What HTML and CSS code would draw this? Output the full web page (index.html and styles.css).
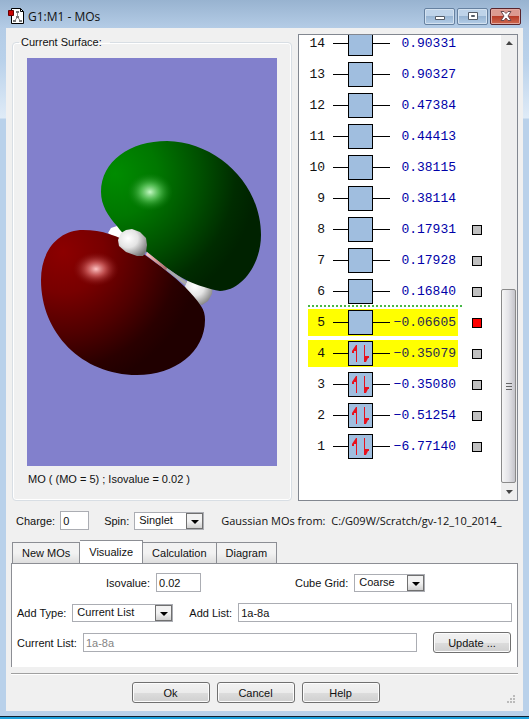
FILE: index.html
```html
<!DOCTYPE html>
<html lang="en">

<head>
    <meta charset="UTF-8">
    <meta name="viewport" content="width=device-width, initial-scale=1.0">
    <title>G1:M1 - MOs</title>
    <link rel="stylesheet" href="styles.css">
</head>

<body>
    <!-- title bar -->
    <header class="titlebar">
        <svg class="app-icon" width="16" height="16" viewBox="0 0 16 16">
            <path d="M3.500 .5h9l3 3v12h-12z" fill="#fff" stroke="#000"/>
            <path d="M12.500 .5v3h3" fill="none" stroke="#000"/>
            <path d="M9.500 4v5M9.500 9l-3 4M9.500 9l3 4" stroke="#888" fill="none"/>
            <path d="M8 3h3v2H8zM8 8h3v2H8zM5 12h3v2H5zM11 12h3v2h-3z" fill="#777"/>
            <path d="M.5 2.500h5v5h-5z" fill="#c80000" stroke="#600"/>
        </svg>
        <h1>G1:M1 - MOs</h1>
        <div class="window-buttons">
            <button aria-label="Minimize"><svg width="12" height="10" viewBox="0 0 12 10"><path d="M1.500 5.500h9v3h-9z" fill="#fff" stroke="#535b66"/></svg></button>
            <button aria-label="Maximize"><svg width="12" height="10" viewBox="0 0 12 10"><path d="M1.500 1.500h9v7h-9z" fill="#fff" stroke="#535b66"/><path d="M4.500 4.500h3v1h-3z" fill="#9cb4d0" stroke="#535b66"/></svg></button>
            <button class="close" aria-label="Close"><svg width="12" height="10" viewBox="0 0 12 10"><path d="M1 .5h3l2 2 2-2h3L8 5l3 4.500H8l-2-2.500-2 2.500H1L4 5z" fill="#fff" stroke="#6b4a4e"/></svg></button>
        </div>
    </header>

    <main class="client">
        <div class="top">
            <fieldset class="surface">
                <legend>Current Surface:</legend>
                <svg class="view" viewBox="0 0 250 408" preserveAspectRatio="xMidYMid slice">
                    <defs>
                        <radialGradient id="green" gradientUnits="userSpaceOnUse" cx="88" cy="116" r="142">
                            <stop offset="0" stop-color="#008c00"/>
                            <stop offset=".3" stop-color="#007700"/>
                            <stop offset=".6" stop-color="#005000"/>
                            <stop offset=".85" stop-color="#002c00"/>
                            <stop offset="1" stop-color="#002200"/>
                        </radialGradient>
                        <radialGradient id="red" gradientUnits="userSpaceOnUse" cx="36" cy="194" r="136">
                            <stop offset="0" stop-color="#8c0000"/>
                            <stop offset=".3" stop-color="#780000"/>
                            <stop offset=".6" stop-color="#500000"/>
                            <stop offset=".85" stop-color="#2a0000"/>
                            <stop offset="1" stop-color="#200000"/>
                        </radialGradient>
                        <radialGradient id="shineGreen">
                            <stop offset="0" stop-color="#c4f8c4"/>
                            <stop offset=".4" stop-color="#60c860" stop-opacity=".8"/>
                            <stop offset="1" stop-color="#108010" stop-opacity="0"/>
                        </radialGradient>
                        <radialGradient id="shineRed">
                            <stop offset="0" stop-color="#ffc4c4"/>
                            <stop offset=".4" stop-color="#d06060" stop-opacity=".8"/>
                            <stop offset="1" stop-color="#801010" stop-opacity="0"/>
                        </radialGradient>
                        <radialGradient id="atom" cx=".35" cy=".35" r=".75">
                            <stop offset="0" stop-color="#fff"/>
                            <stop offset=".45" stop-color="#e4e4e4"/>
                            <stop offset="1" stop-color="#777"/>
                        </radialGradient>
                        <linearGradient id="bond">
                            <stop offset="0" stop-color="#ffc8c4"/>
                            <stop offset="1" stop-color="#a86860"/>
                        </linearGradient>
                    </defs>
                    <path d="M81 175l3-5 6-2 6 4 3 10-11-2z" fill="#fff"/>
                    <path d="M158 228l3-7 10-3 10 2 5 6-1 10-4 7-6 4-7-2-8-8z" fill="url(#atom)"/>
                    <path d="M74 134C74 103 103 83 140 83C190 84 234 126 234 177C234 207 214 233 193 233C182 231 170 227 161 223C153 219 147 215 140 210L120 194C108 187 97 178 90 168C81 158 74 147 74 134z" fill="url(#green)"/>
                    <path d="M14 222C14 192 32 172 56 172C75 172 92 178 105 187L118 197C132 207 147 218 158 229C164 235 170 242 174 248C177 252 178 257 178 262C178 294 148 317 110 317C55 317 14 275 14 222z" fill="url(#red)"/>
                    <path d="M120 194l20 16v3l-21-16z" fill="url(#bond)"/>
                    <path d="M140 210l20 14-2 3-19-15z" fill="#aaa"/>
                    <ellipse cx="123" cy="134" rx="23" ry="19" fill="url(#shineGreen)"/>
                    <ellipse cx="69" cy="211" rx="23" ry="17" fill="url(#shineRed)"/>
                    <path d="M91 182l3-7 5-3 6-1 8 3 6 6 1 7-1 7-3 4-6 0-11-4-7-6z" fill="url(#atom)"/>
                </svg>
                <p>MO ( (MO = 5) ; Isovalue = 0.02 )</p>
            </fieldset>

            <!-- orbital energy levels -->
            <div class="levels">
                <ol reversed>
                    <li><span class="level"><b>14</b><i></i><span class="box"></span><i></i><span class="energy">0.90331</span></span></li>
                    <li><span class="level"><b>13</b><i></i><span class="box"></span><i></i><span class="energy">0.90327</span></span></li>
                    <li><span class="level"><b>12</b><i></i><span class="box"></span><i></i><span class="energy">0.47384</span></span></li>
                    <li><span class="level"><b>11</b><i></i><span class="box"></span><i></i><span class="energy">0.44413</span></span></li>
                    <li><span class="level"><b>10</b><i></i><span class="box"></span><i></i><span class="energy">0.38115</span></span></li>
                    <li><span class="level"><b>9</b><i></i><span class="box"></span><i></i><span class="energy">0.38114</span></span></li>
                    <li><span class="level"><b>8</b><i></i><span class="box"></span><i></i><span class="energy">0.17931</span></span><input type="checkbox" aria-label="Show MO 8"></li>
                    <li><span class="level"><b>7</b><i></i><span class="box"></span><i></i><span class="energy">0.17928</span></span><input type="checkbox" aria-label="Show MO 7"></li>
                    <li class="lumo"><span class="level"><b>6</b><i></i><span class="box"></span><i></i><span class="energy">0.16840</span></span><input type="checkbox" aria-label="Show MO 6"></li>
                    <li class="selected"><span class="level"><b>5</b><i></i><span class="box"></span><i></i><span class="energy">&minus;0.06605</span></span><input type="checkbox" aria-label="Show MO 5" checked></li>
                    <li class="selected"><span class="level"><b>4</b><i></i><span class="box"><svg width="23" height="23"><use href="#pair"/></svg></span><i></i><span class="energy">&minus;0.35079</span></span><input type="checkbox" aria-label="Show MO 4"></li>
                    <li><span class="level"><b>3</b><i></i><span class="box"><svg width="23" height="23"><use href="#pair"/></svg></span><i></i><span class="energy">&minus;0.35080</span></span><input type="checkbox" aria-label="Show MO 3"></li>
                    <li><span class="level"><b>2</b><i></i><span class="box"><svg width="23" height="23"><use href="#pair"/></svg></span><i></i><span class="energy">&minus;0.51254</span></span><input type="checkbox" aria-label="Show MO 2"></li>
                    <li><span class="level"><b>1</b><i></i><span class="box"><svg width="23" height="23"><g id="pair" fill="#e8101c"><path d="M7 20V9H5v2H3V9l2-3 2-3h1v17z"/><path d="M15 3h1v11h4v2h-1l-2 4h-2z"/></g></svg></span><i></i><span class="energy">&minus;6.77140</span></span><input type="checkbox" aria-label="Show MO 1"></li>
                </ol>
                <div class="scrollbar">
                    <svg width="16" height="17"><path d="M5 10l3-4 4 4z" fill="#444"/></svg>
                    <div class="track">
                        <div class="thumb"><svg width="8" height="9"><path d="M1 1h6M1 4h6M1 7h6" stroke="#666" shape-rendering="crispEdges"/></svg></div>
                    </div>
                    <svg width="16" height="17"><path d="M5 7h7l-4 4z" fill="#444"/></svg>
                </div>
            </div>
        </div>

        <div class="state">
            <label for="charge">Charge:</label>
            <input id="charge" class="charge" type="text" value="0">
            <label for="spin">Spin:</label>
            <span class="combo spin"><select id="spin"><option>Singlet</option></select></span>
            <span class="source">Gaussian MOs from: &nbsp;C:/G09W/Scratch/gv-12_10_2014_</span>
        </div>

        <nav class="tabs">
            <button>New MOs</button>
            <button class="active">Visualize</button>
            <button>Calculation</button>
            <button>Diagram</button>
        </nav>
        <section class="panel">
            <div class="row">
                <label class="iso-label" for="isovalue">Isovalue:</label>
                <input id="isovalue" class="isovalue" type="text" value="0.02">
                <label class="grid-label" for="grid">Cube Grid:</label>
                <span class="combo cube"><select id="grid"><option>Coarse</option></select></span>
            </div>
            <div class="row">
                <label for="addtype">Add Type:</label>
                <span class="combo addtype"><select id="addtype"><option>Current List</option></select></span>
                <label class="list-label" for="addlist">Add List:</label>
                <input id="addlist" class="fill" type="text" value="1a-8a">
            </div>
            <div class="row">
                <label for="current">Current List:</label>
                <input id="current" class="fill" type="text" value="1a-8a" disabled>
                <button class="push update">Update ...</button>
            </div>
        </section>

        <footer class="actions">
            <button class="push">Ok</button>
            <button class="push">Cancel</button>
            <button class="push">Help</button>
            <svg class="grip" width="10" height="10"><path d="M7 0h2v2H7zM4 3h2v2H4zM7 3h2v2H7zM1 6h2v2H1zM4 6h2v2H4zM7 6h2v2H7z" fill="#bbb"/></svg>
        </footer>
    </main>
</body>

</html>
```
FILE: styles.css
```css
* {
    box-sizing: border-box;
}

/* window frame */
body {
    margin: 0;
    min-height: 100vh;
    padding: 0 6px 6px;
    display: flex;
    flex-direction: column;
    font-family: "Liberation Sans", Arial, sans-serif;
    font-size: 11px;
    color: #111;
    background: linear-gradient(#98b3d0, #b4cce6 28px, #b9d1ea 60px, #dfebf7 118px, #b9d1ea 119px);
    border-bottom: 2px solid #1ca0dc;
    box-shadow: inset 0 -1px #123;
}

button, input, select {
    font: inherit;
    color: inherit;
    margin: 0;
}

/* title bar */
.titlebar {
    display: flex;
    align-items: center;
    height: 28px;
    padding: 4px 2px 0;
}

h1 {
    flex: 1;
    margin: 0 0 0 4px;
    font: 12px "Open Sans", "Noto Sans", sans-serif;
}

.window-buttons {
    display: flex;
    gap: 2px;
}

.window-buttons button {
    display: flex;
    align-items: center;
    justify-content: center;
    width: 31px;
    height: 17px;
    padding: 0;
    border: 1px solid #6681a0;
    border-radius: 2px;
    background: linear-gradient(#bed3e9 50%, #98b5d3 50%, #b4cde7);
    box-shadow: inset 0 0 0 1px #d4e2f0;
}

.window-buttons .close {
    border-color: #58242c;
    background: linear-gradient(#dc9a90 50%, #b83c28 50%, #cf6a50);
    box-shadow: inset 0 0 0 1px #e2a8a0;
}

/* window contents */
.client {
    flex: 1;
    display: flex;
    flex-direction: column;
    padding: 6px 5px 7px 5px;
    background: #f0f0f0;
}

.top {
    display: flex;
    gap: 6px;
}

.surface {
    flex: 1;
    display: flex;
    flex-direction: column;
    min-width: 0;
    margin: 2px 0 0 1px;
    padding: 10px 14px 14px;
    border: 1px solid #d8dee4;
    border-radius: 4px;
    box-shadow: inset 0 0 0 1px #fff;
}

.surface legend {
    margin-left: -8px;
    padding: 0 8px 0 2px;
}

.view {
    flex: 1;
    width: 100%;
    min-height: 0;
    background: #8280cc;
}

.surface p {
    margin: 6px 0 0 1px;
    line-height: 14px;
}

/* energy levels */
.levels {
    display: flex;
    width: 220px;
    height: 467px;
    border: 1px solid #828790;
    background: #fff;
}

.levels ol {
    flex: 1;
    display: flex;
    flex-direction: column;
    justify-content: flex-end;
    margin: 0;
    padding: 0 0 38px 9px;
    overflow: hidden;
    list-style: none;
    font: 13px "Liberation Mono", monospace;
}

.levels li {
    display: flex;
    flex: none;
    align-items: center;
    gap: 14px;
    height: 31px;
}

.level {
    display: grid;
    grid-template-columns: 25px 15px 25px 17px 66px;
    align-items: center;
    width: 150px;
    height: 27px;
}

.level b {
    padding-right: 8px;
    font-weight: normal;
    text-align: right;
}

.level i {
    height: 1px;
    background: #000;
}

.box {
    height: 25px;
    border: 1px solid #000;
    background: #a0bedf;
}

.box svg {
    display: block;
}

.energy {
    color: #0000a8;
    text-align: right;
}

.selected .level {
    background: #ff0;
}

.selected .energy {
    color: #2a2a50;
}

.lumo {
    position: relative;
}

/* line between filled and empty levels */
.lumo::after {
    content: "";
    position: absolute;
    left: 0;
    bottom: 0;
    width: 154px;
    height: 2px;
    background: repeating-linear-gradient(90deg, #48b848 0 2px, #fff 2px 4px);
}

.levels input {
    appearance: none;
    width: 10px;
    height: 10px;
    border: 1px solid #000;
    background: #c0c0c0;
}

.levels input:checked {
    background: #f00;
}

.scrollbar {
    display: flex;
    flex-direction: column;
    width: 16px;
    background: #eee;
}

.track {
    flex: 1;
    display: flex;
    align-items: flex-end;
}

.thumb {
    display: flex;
    align-items: center;
    justify-content: center;
    width: 15px;
    height: 45%;
    border: 1px solid #8a8a8a;
    border-radius: 2px;
    background: linear-gradient(90deg, #f6f6f6, #e4e4e8 50%, #c4c4ca);
}

/* text boxes and drop-downs */
input[type="text"] {
    height: 19px;
    min-width: 0;
    padding: 1px 2px;
    border: 1px solid #abadb3;
    background: #fff;
}

input[type="text"]:disabled {
    color: #848484;
}

.combo {
    position: relative;
    height: 18px;
}

.combo select {
    appearance: none;
    display: block;
    width: 100%;
    height: 100%;
    padding: 0 18px 2px 4px;
    border: 1px solid #abadb3;
    border-radius: 0;
    background: #fff;
}

.combo::before {
    content: "";
    position: absolute;
    top: 1px;
    right: 1px;
    bottom: 1px;
    width: 15px;
    border: 1px solid #707070;
    background: linear-gradient(#f2f2f2 50%, #d0d0d0);
    pointer-events: none;
}

.combo::after {
    content: "";
    position: absolute;
    top: 8px;
    right: 5px;
    border: 4px solid transparent;
    border-top-color: #000;
    border-bottom: 0;
    pointer-events: none;
}

.state {
    display: flex;
    align-items: center;
    height: 19px;
    margin: 10px 5px 10px 5px;
    white-space: nowrap;
}

.charge {
    width: 29px;
    margin: 0 15px 0 5px;
}

.spin {
    width: 70px;
    margin: 0 17px 0 5px;
}

.source {
    flex: 1;
    min-width: 0;
    font: 11px "Open Sans", "Noto Sans", sans-serif;
}

/* tabs */
.tabs {
    display: flex;
    align-items: flex-end;
    height: 23px;
    padding-left: 1px;
}

.tabs button {
    height: 21px;
    padding: 0 9px;
    border: 1px solid #8c8e94;
    border-bottom: 0;
    border-left-width: 0;
    background: linear-gradient(#f2f2f2 50%, #dedede);
}

.tabs button:first-child {
    border-left-width: 1px;
}

.tabs .active {
    height: 24px;
    margin-bottom: -1px;
    padding-bottom: 2px;
    background: #fff;
}

.panel {
    display: flex;
    flex-direction: column;
    gap: 9px;
    padding: 8px 5px 14px;
    border: 1px solid #8c8e94;
    border-bottom: 0;
    background: #fff;
}

.row {
    display: flex;
    align-items: center;
    gap: 6px;
    height: 21px;
    white-space: nowrap;
}

.row .iso-label {
    margin-left: 89px;
}

.isovalue {
    width: 45px;
}

.grid-label {
    margin-left: 88px;
}

.cube {
    width: 71px;
}

.addtype {
    width: 101px;
}

.list-label {
    margin-left: 10px;
}

.fill {
    flex: 1;
}

/* push buttons */
.push {
    width: 78px;
    height: 21px;
    padding: 0;
    border: 1px solid #707070;
    border-radius: 3px;
    background: linear-gradient(#f2f2f2, #ebebeb 50%, #dddddd 50%, #cfcfcf);
    box-shadow: inset 0 0 0 1px #fcfcfc;
}

.update {
    margin: 0 1px 0 10px;
}

.actions {
    position: relative;
    display: flex;
    justify-content: center;
    gap: 7px;
    margin-top: 6px;
    padding: 8px 18px 0 0;
    border-top: 1px solid #a0a0a0;
    box-shadow: inset 0 1px #fff;
}

.grip {
    position: absolute;
    right: 2px;
    bottom: -2px;
}
```
